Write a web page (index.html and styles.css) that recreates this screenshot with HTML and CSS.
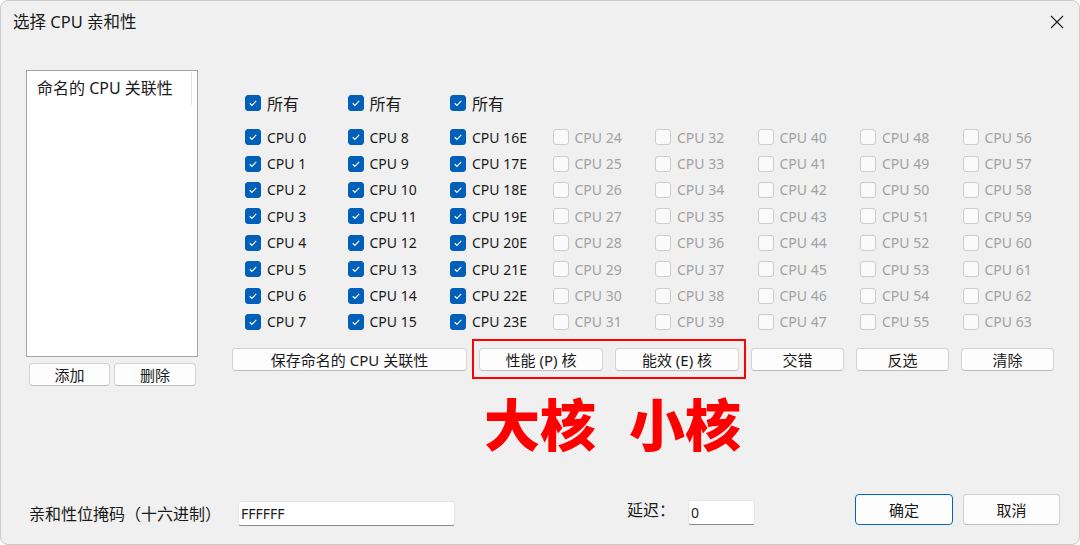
FILE: index.html
```html
<!DOCTYPE html>
<html lang="zh-CN">
<head>
    <meta charset="UTF-8">
    <meta name="viewport" content="width=device-width, initial-scale=1.0">
    <title>选择 CPU 亲和性</title>
    <link rel="stylesheet" href="styles.css">
</head>
<body>
    <div class="window">
        <header class="titlebar">
            <span class="title">选择 CPU 亲和性</span>
            <svg class="close" width="14" height="14" viewBox="0 0 14 14">
                <path d="M1 1L13 13M13 1L1 13"/>
            </svg>
        </header>

        <main class="content">
            <div class="side">
                <div class="listbox">
                    <div class="list-item">命名的 CPU 关联性</div>
                </div>
                <div class="side-buttons">
                    <button class="btn btn-add">添加</button>
                    <button class="btn btn-del">删除</button>
                </div>
            </div>

            <div class="panel">
                <div class="all-row" id="allRow"></div>
                <div class="cpu-grid" id="cpuGrid"></div>

                <div class="actions">
                    <button class="btn btn-save">保存命名的 CPU 关联性</button>
                    <div class="pe-group">
                        <button class="btn btn-core">性能 (P) 核</button>
                        <button class="btn btn-core">能效 (E) 核</button>
                    </div>
                    <button class="btn btn-small">交错</button>
                    <button class="btn btn-small">反选</button>
                    <button class="btn btn-small">清除</button>
                </div>

                <div class="note">
                    <span>大核</span>
                    <span>小核</span>
                </div>
            </div>
        </main>

        <footer class="bottom">
            <span class="mask-label">亲和性位掩码（十六进制）</span>
            <input class="field mask-input" type="text" value="FFFFFF">
            <span class="delay-label">延迟：</span>
            <input class="field delay-input" type="text" value="0">
            <button class="btn btn-ok">确定</button>
            <button class="btn btn-cancel">取消</button>
        </footer>
    </div>

    <script>
        const allRow = document.getElementById("allRow");
        const cpuGrid = document.getElementById("cpuGrid");
        const checkSvg = '<svg viewBox="0 0 16 16"><path d="M4.3 8.3l2.4 2.4 5-5.2"/></svg>';

        function makeCheck(text, checked) {
            const item = document.createElement("label");
            item.className = checked ? "check" : "check disabled";
            const box = document.createElement("span");
            box.className = checked ? "box checked" : "box";
            if (checked) box.innerHTML = checkSvg;
            const label = document.createElement("span");
            label.className = "check-text";
            label.textContent = text;
            item.appendChild(box);
            item.appendChild(label);
            return item;
        }

        // one "所有" per populated group
        for (let g = 0; g < 3; g++) {
            allRow.appendChild(makeCheck("所有", true));
        }

        // 64 logical cores, grid flows column by column
        for (let i = 0; i < 64; i++) {
            let name = "CPU " + i;
            if (i >= 16 && i < 24) name += "E";
            cpuGrid.appendChild(makeCheck(name, i < 24));
        }
    </script>
</body>
</html>
```

FILE: styles.css
```css
* {
    box-sizing: border-box;
}

body {
    margin: 0;
    background-color: #ffffff;
    font-family: "Noto Sans", "Noto Sans CJK SC", sans-serif;
    color: #1a1a1a;
}

.window {
    width: 1080px;
    height: 545px;
    background-color: #f0f0f0;
    border: 1px solid #cacaca;
    border-radius: 8px;
    display: flex;
    flex-direction: column;
    overflow: hidden;
}

.titlebar {
    height: 41px;
    padding: 0 15px 0 12px;
    display: flex;
    align-items: center;
    justify-content: space-between;
    flex: none;
}

.title {
    font-size: 16.5px;
    line-height: 20px;
    margin-top: 1px;
}

.close {
    margin-top: 1px;
}

.close path {
    stroke: #1a1a1a;
    stroke-width: 1.1;
    fill: none;
}

.content {
    display: flex;
    padding: 28px 0 0 25px;
}

.side {
    width: 172px;
    flex: none;
}

.listbox {
    height: 287px;
    background-color: #ffffff;
    border: 1px solid #a3a3a3;
    padding: 1px;
}

.list-item {
    width: 164px;
    height: 33px;
    line-height: 33px;
    padding-left: 9px;
    font-size: 16px;
    border-right: 1px solid #e3e3e3;
}

.side-buttons {
    display: flex;
    gap: 4px;
    margin-top: 6px;
    padding-left: 3px;
}

.btn {
    height: 23px;
    padding: 0;
    background-color: #fdfdfd;
    border: 1px solid #d3d3d3;
    border-bottom-color: #bdbdbd;
    border-radius: 4px;
    font-family: inherit;
    font-size: 15px;
    line-height: 20px;
    color: #1a1a1a;
}

.btn-add {
    width: 81px;
}

.btn-del {
    width: 82px;
}

.panel {
    margin-left: 34px;
}

.all-row,
.cpu-grid {
    display: grid;
    grid-template-columns: repeat(8, 102.5px);
    padding-left: 13px;
}

.all-row {
    height: 26px;
    margin-top: 20px;
    margin-bottom: 8px;
}

.cpu-grid {
    grid-template-rows: repeat(8, 26.4px);
    grid-auto-flow: column;
}

.check {
    display: flex;
    align-items: center;
    gap: 6px;
    font-size: 14px;
    white-space: nowrap;
}

.all-row .check {
    font-size: 16px;
}

.check.disabled {
    color: #a2a2a2;
}

.box {
    width: 16px;
    height: 16px;
    flex: none;
    border-radius: 3px;
    background-color: #fafafa;
    border: 1px solid #cdcdcd;
}

.box.checked {
    background-color: #005fb8;
    border-color: #005fb8;
}

.box svg {
    display: block;
    width: 14px;
    height: 14px;
}

.box svg path {
    fill: none;
    stroke: #ffffff;
    stroke-width: 1.3;
}

.actions {
    display: flex;
    gap: 12px;
    margin-top: 13px;
}

.btn-save {
    width: 235px;
}

.pe-group {
    position: relative;
    display: flex;
    gap: 12px;
}

/* red highlight around the P/E core buttons */
.pe-group::after {
    content: "";
    position: absolute;
    left: -7px;
    right: -7px;
    top: -9px;
    bottom: -8px;
    border: 2px solid #ff0000;
}

.btn-core {
    width: 124px;
}

.btn-small {
    width: 93px;
}

.note {
    display: flex;
    gap: 33px;
    margin-top: 25px;
    margin-left: 252px;
    font-size: 56px;
    line-height: 56px;
    font-weight: 900;
    color: #ff0000;
}

.bottom {
    margin-top: auto;
    display: flex;
    align-items: flex-end;
    padding: 0 19px 18px 28px;
    font-size: 16px;
}

.mask-label {
    width: 209px;
    flex: none;
    line-height: 24px;
}

.field {
    height: 25px;
    background-color: #ffffff;
    border: 1px solid #e6e6e6;
    border-bottom-color: #8a8a8a;
    border-radius: 3px;
    padding: 0 2px;
    font-family: inherit;
    font-size: 14px;
    color: #1a1a1a;
    outline: none;
}

.mask-input {
    width: 217px;
}

.delay-label {
    width: 48px;
    margin-left: 172px;
    margin-bottom: 4px;
    line-height: 24px;
}

.delay-input {
    width: 67px;
    margin-left: 13px;
    margin-bottom: 1px;
}

.btn-ok,
.btn-cancel {
    height: 31px;
    margin-bottom: 1px;
}

.btn-ok {
    width: 98px;
    margin-left: 100px;
    border-color: #0067c0;
}

.btn-cancel {
    width: 97px;
    margin-left: 10px;
}
```
